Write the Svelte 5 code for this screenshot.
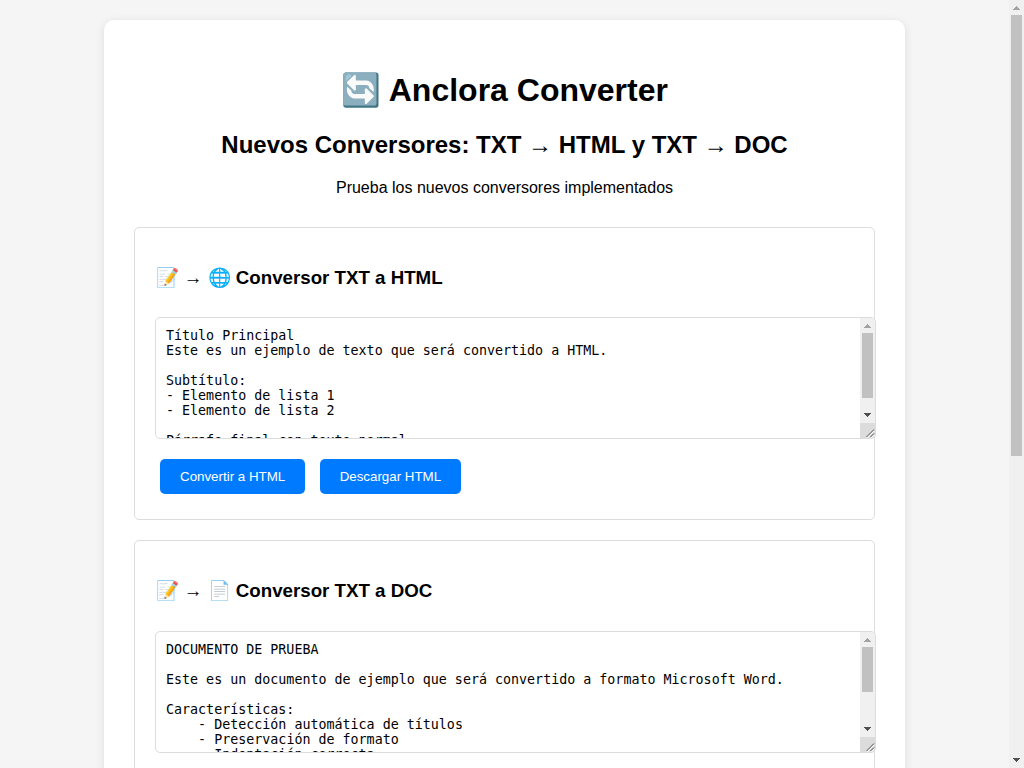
<script>
  const html = `Título Principal
Este es un ejemplo de texto que será convertido a HTML.

Subtítulo:
- Elemento de lista 1
- Elemento de lista 2

Párrafo final con texto normal.`;
  const doc = `DOCUMENTO DE PRUEBA

Este es un documento de ejemplo que será convertido a formato Microsoft Word.

Características:
    - Detección automática de títulos
    - Preservación de formato
    - Indentación correcta`;
</script>

{#snippet scrollbar(height, top, length)}
  <svg class="bar" width="15" {height} viewBox="0 0 15 {height}" shape-rendering="crispEdges">
    <rect width="15" {height} fill="#f0f0f0" />
    <path d="M4 10V9H5V8H6V7H7V6H8V7H9V8H10V9H11V10Z" fill="#a3a3a3" />
    <rect x="2" y={top} width="11" height={length} fill="#c1c1c1" />
    <path transform="translate(0 {height - 15})" d="M4 5V6H5V7H6V8H7V9H8V8H9V7H10V6H11V5Z" fill="#505050" />
  </svg>
{/snippet}

{#snippet editor(text, top, length)}
  <div class="editor">
    <textarea value={text}></textarea>
    <div class="rail">
      {@render scrollbar(105, top, length)}
      <svg class="bar" width="15" height="15" viewBox="0 0 15 15">
        <rect width="15" height="15" fill="#dcdcdc" />
        <path d="M7 14L14 7M11 14L14 11" stroke="#fff" transform="translate(0 1)" />
        <path d="M6.5 14L14 6.5M10.5 14L14 10.5" stroke="#505050" />
      </svg>
    </div>
  </div>
{/snippet}

<div class="window">
  <main>
    <div class="container">
      <header>
        <h1>🔄 Anclora Converter</h1>
        <h2>Nuevos Conversores: TXT → HTML y TXT → DOC</h2>
        <p>Prueba los nuevos conversores implementados</p>
      </header>

      <div class="section">
        <h3>📝 → 🌐 Conversor TXT a HTML</h3>
        {@render editor(html, 15, 65)}
        <button>Convertir a HTML</button>
        <button>Descargar HTML</button>
      </div>

      <div class="section">
        <h3>📝 → 📄 Conversor TXT a DOC</h3>
        {@render editor(doc, 15, 45)}
      </div>
    </div>
  </main>
  {@render scrollbar(768, 15, 441)}
</div>

<style>
  :global(body) {
    background: #f5f5f5;
  }
  .window {
    display: flex;
    height: 768px;
    overflow: hidden;
    font-family: "Liberation Sans", Arial, sans-serif;
  }
  main {
    flex: 1;
    padding: 20px 0;
  }
  .container {
    width: 741px;
    margin: 0 auto;
    background: white;
    padding: 30px;
    border-radius: 10px;
    box-shadow: 0 2px 10px rgba(0, 0, 0, 0.1);
  }
  header {
    display: flow-root;
    text-align: center;
    margin-bottom: 30px;
  }
  header p {
    margin-bottom: 0;
  }
  .section {
    margin: 20px 0;
    padding: 20px;
    border: 1px solid #ddd;
    border-radius: 5px;
  }
  h3 {
    padding-left: 0.5px;
  }
  .editor {
    display: inline-flex;
    position: relative;
    width: calc(100% + 22px);
    margin: 10px 0 15px;
    border-radius: 5px;
    vertical-align: bottom;
  }
  textarea {
    flex: 1;
    box-sizing: border-box;
    height: 122px;
    margin: 0;
    padding: 10px;
    border: 1px solid #ddd;
    border-radius: 5px;
    font-family: monospace;
    resize: none;
    overflow: hidden;
  }
  .rail {
    position: absolute;
    top: 1px;
    right: 1px;
    width: 15px;
    height: 120px;
    overflow: hidden;
    border-radius: 0 4px 4px 0;
  }
  .bar {
    display: block;
    flex: none;
  }
  button {
    background: #007bff;
    color: white;
    padding: 10px 20px;
    border: none;
    border-radius: 5px;
    margin: 5px;
  }
</style>
